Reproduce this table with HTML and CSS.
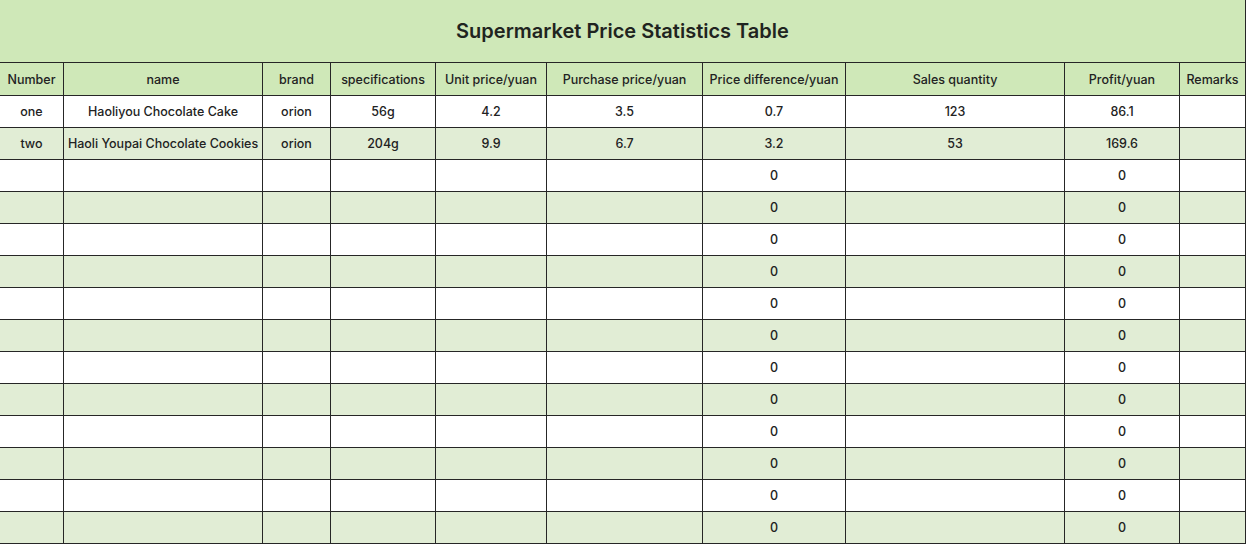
FILE: index.html
```html
<!DOCTYPE html>
<html>
<head>
<meta charset="utf-8">
<link rel="stylesheet" href="styles.css">
</head>
<body>
<div class="sheet">
  <div class="title">Supermarket Price Statistics Table</div>
  <div class="grid">
    <div class="c h">Number</div><div class="c h">name</div><div class="c h">brand</div><div class="c h">specifications</div><div class="c h">Unit price/yuan</div><div class="c h">Purchase price/yuan</div><div class="c h">Price difference/yuan</div><div class="c h">Sales quantity</div><div class="c h">Profit/yuan</div><div class="c h">Remarks</div>

    <div class="c">one</div><div class="c">Haoliyou Chocolate Cake</div><div class="c">orion</div><div class="c">56g</div><div class="c">4.2</div><div class="c">3.5</div><div class="c">0.7</div><div class="c">123</div><div class="c">86.1</div><div class="c"></div>

    <div class="c a">two</div><div class="c a">Haoli Youpai Chocolate Cookies</div><div class="c a">orion</div><div class="c a">204g</div><div class="c a">9.9</div><div class="c a">6.7</div><div class="c a">3.2</div><div class="c a">53</div><div class="c a">169.6</div><div class="c a"></div>

    <div class="c"></div><div class="c"></div><div class="c"></div><div class="c"></div><div class="c"></div><div class="c"></div><div class="c">0</div><div class="c"></div><div class="c">0</div><div class="c"></div>
    <div class="c a"></div><div class="c a"></div><div class="c a"></div><div class="c a"></div><div class="c a"></div><div class="c a"></div><div class="c a">0</div><div class="c a"></div><div class="c a">0</div><div class="c a"></div>
    <div class="c"></div><div class="c"></div><div class="c"></div><div class="c"></div><div class="c"></div><div class="c"></div><div class="c">0</div><div class="c"></div><div class="c">0</div><div class="c"></div>
    <div class="c a"></div><div class="c a"></div><div class="c a"></div><div class="c a"></div><div class="c a"></div><div class="c a"></div><div class="c a">0</div><div class="c a"></div><div class="c a">0</div><div class="c a"></div>
    <div class="c"></div><div class="c"></div><div class="c"></div><div class="c"></div><div class="c"></div><div class="c"></div><div class="c">0</div><div class="c"></div><div class="c">0</div><div class="c"></div>
    <div class="c a"></div><div class="c a"></div><div class="c a"></div><div class="c a"></div><div class="c a"></div><div class="c a"></div><div class="c a">0</div><div class="c a"></div><div class="c a">0</div><div class="c a"></div>
    <div class="c"></div><div class="c"></div><div class="c"></div><div class="c"></div><div class="c"></div><div class="c"></div><div class="c">0</div><div class="c"></div><div class="c">0</div><div class="c"></div>
    <div class="c a"></div><div class="c a"></div><div class="c a"></div><div class="c a"></div><div class="c a"></div><div class="c a"></div><div class="c a">0</div><div class="c a"></div><div class="c a">0</div><div class="c a"></div>
    <div class="c"></div><div class="c"></div><div class="c"></div><div class="c"></div><div class="c"></div><div class="c"></div><div class="c">0</div><div class="c"></div><div class="c">0</div><div class="c"></div>
    <div class="c a"></div><div class="c a"></div><div class="c a"></div><div class="c a"></div><div class="c a"></div><div class="c a"></div><div class="c a">0</div><div class="c a"></div><div class="c a">0</div><div class="c a"></div>
    <div class="c"></div><div class="c"></div><div class="c"></div><div class="c"></div><div class="c"></div><div class="c"></div><div class="c">0</div><div class="c"></div><div class="c">0</div><div class="c"></div>
    <div class="c a"></div><div class="c a"></div><div class="c a"></div><div class="c a"></div><div class="c a"></div><div class="c a"></div><div class="c a">0</div><div class="c a"></div><div class="c a">0</div><div class="c a"></div>
  </div>
</div>
</body>
</html>
```

FILE: styles.css
```css
* { box-sizing: border-box; }
html, body { margin: 0; padding: 0; background: #ffffff; }
body {
  font-family: Inter, "Noto Sans", "Liberation Sans", sans-serif;
  color: #222222;
}
.sheet { width: 1246px; }
.title {
  height: 63px;
  background: #cfe8b8;
  border-right: 1px solid #262626;
  border-bottom: 1px solid #262626;
  display: flex;
  align-items: center;
  justify-content: center;
  font-size: 20px;
  font-weight: 600;
  color: #1f2420;
}
.grid {
  display: grid;
  grid-template-columns: 64px 199px 68px 105px 111px 156px 143px 219px 115px 66px;
  grid-template-rows: 33px;
  grid-auto-rows: 32px;
}
.c {
  border-right: 1px solid #262626;
  border-bottom: 1px solid #262626;
  display: flex;
  align-items: center;
  justify-content: center;
  font-size: 12.5px;
  font-weight: 500;
  white-space: nowrap;
  overflow: hidden;
  background: #ffffff;
}
.c.h { background: #cfe8b8; }
.c.a { background: #e1edd5; }
```
